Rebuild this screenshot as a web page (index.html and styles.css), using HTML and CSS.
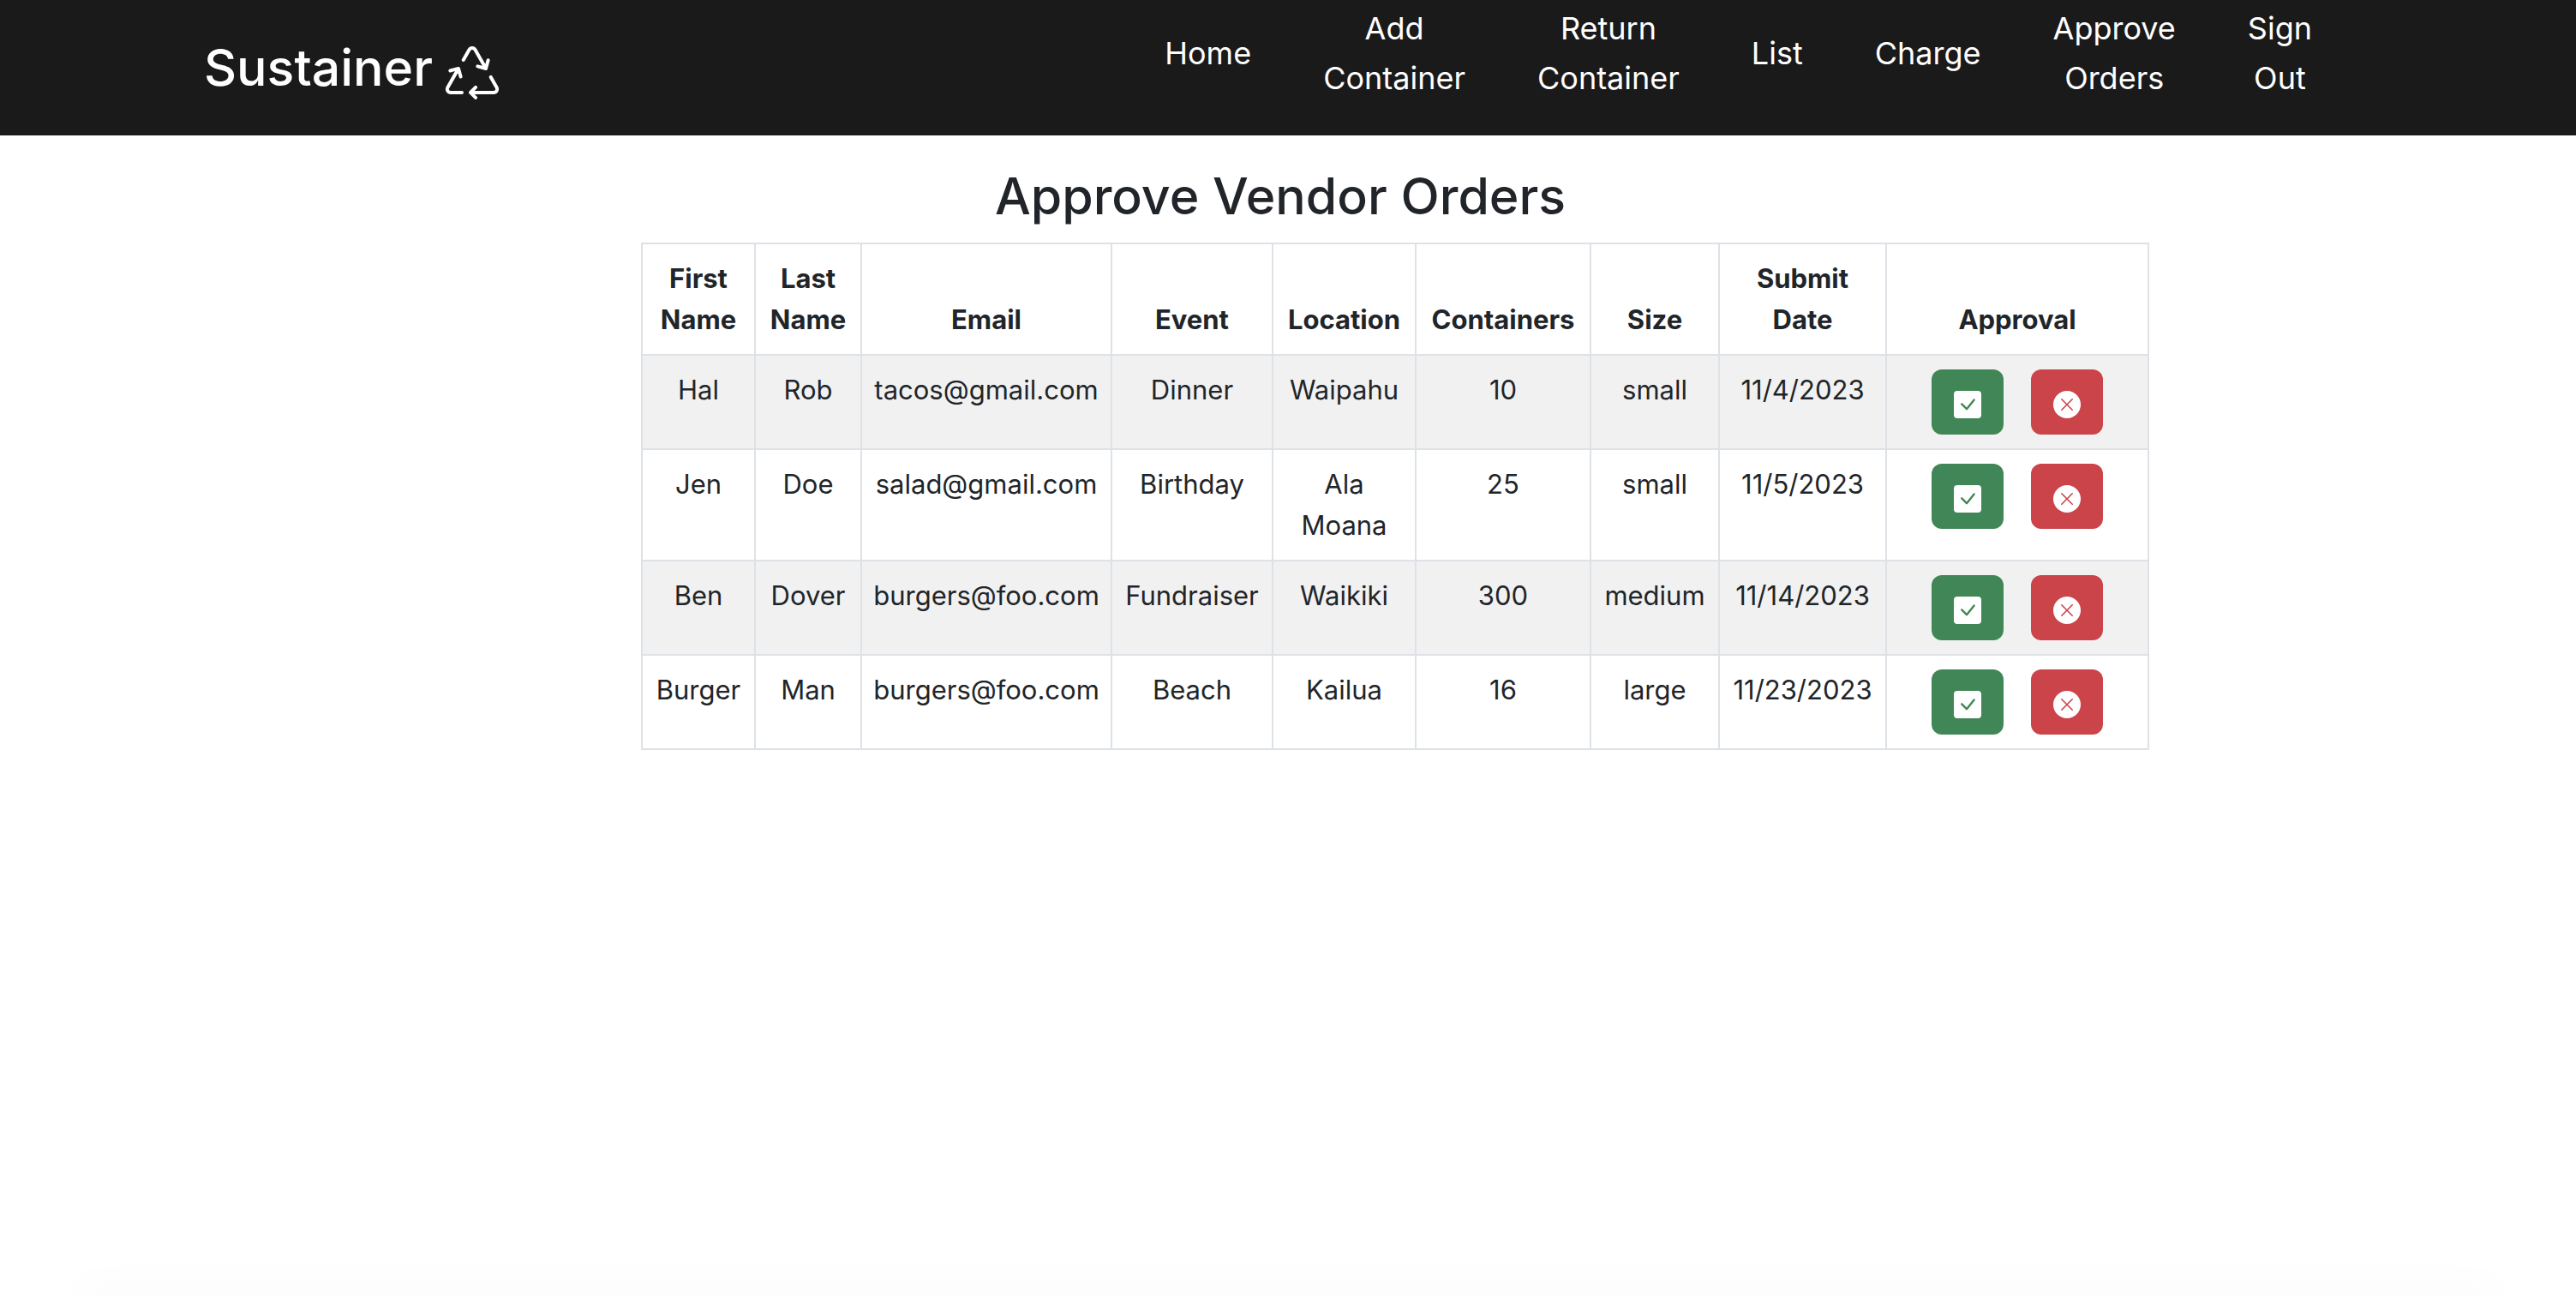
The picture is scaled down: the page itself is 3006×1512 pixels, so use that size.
FILE: index.html
```html
<!DOCTYPE html>
<html lang="en">
<head>
  <meta charset="utf-8">
  <title>Sustainer</title>
  <link rel="stylesheet" href="styles.css">
</head>
<body>
  <svg class="sprite" aria-hidden="true">
    <symbol id="check" viewBox="0 0 16 16">
      <rect width="16" height="16" rx="2" fill="#fff"/>
      <path d="M4.6 7.7l2.9 2.9L11.8 5.2" fill="none" stroke="#418657" stroke-width="1.2" stroke-linecap="round" stroke-linejoin="round"/>
    </symbol>
    <symbol id="cross" viewBox="0 0 16 16">
      <circle cx="8" cy="8" r="8" fill="#fff"/>
      <path d="M4.9 4.9l6.2 6.2M11.1 4.9l-6.2 6.2" fill="none" stroke="#cb444a" stroke-width=".8" stroke-linecap="round"/>
    </symbol>
  </svg>

  <header class="navbar">
    <a class="brand" href="#">
      Sustainer
      <svg class="brand-icon" viewBox="0 0 16 16" fill="currentColor" aria-hidden="true"><path d="M9.302 1.256a1.5 1.5 0 0 0-2.604 0l-1.704 2.98a.5.5 0 0 0 .869.497l1.703-2.981a.5.5 0 0 1 .868 0l2.54 4.444-1.256-.337a.5.5 0 1 0-.26.966l2.415.647a.5.5 0 0 0 .613-.353l.647-2.415a.5.5 0 1 0-.966-.259l-.333 1.242-2.532-4.431zM2.973 7.773l-1.255.337a.5.5 0 1 1-.26-.966l2.416-.647a.5.5 0 0 1 .612.353l.647 2.415a.5.5 0 0 1-.966.259l-.333-1.242-2.545 4.454a.5.5 0 0 0 .434.748H5a.5.5 0 0 1 0 1H1.723A1.5 1.5 0 0 1 .421 12.24l2.552-4.467zm10.89 1.463a.5.5 0 1 0-.868.496l1.716 3.004a.5.5 0 0 1-.434.748h-5.57l.647-.646a.5.5 0 1 0-.708-.707l-1.5 1.5a.498.498 0 0 0 0 .707l1.5 1.5a.5.5 0 1 0 .708-.707l-.647-.647h5.57a1.5 1.5 0 0 0 1.302-2.244l-1.716-3.004z"/></svg>
    </a>
    <nav class="links">
      <a href="#">Home</a>
      <a href="#">Add Container</a>
      <a href="#">Return Container</a>
      <a href="#">List</a>
      <a href="#">Charge</a>
      <a href="#">Approve Orders</a>
      <a href="#">Sign Out</a>
    </nav>
  </header>

  <main class="page">
    <h1 class="title">Approve Vendor Orders</h1>
    <table class="orders">
      <colgroup>
        <col class="col-first"><col class="col-last"><col class="col-email"><col class="col-event"><col class="col-location"><col class="col-containers"><col class="col-size"><col class="col-date"><col class="col-approval">
      </colgroup>
      <thead>
        <tr><th>First Name</th><th>Last Name</th><th>Email</th><th>Event</th><th>Location</th><th>Containers</th><th>Size</th><th>Submit Date</th><th>Approval</th></tr>
      </thead>
      <tbody>
        <tr>
          <td>Hal</td><td>Rob</td><td>tacos@gmail.com</td><td>Dinner</td><td>Waipahu</td><td>10</td><td>small</td><td>11/4/2023</td>
          <td><div class="actions"><button class="btn approve" type="button" aria-label="Approve"><svg><use href="#check"/></svg></button><button class="btn reject" type="button" aria-label="Reject"><svg><use href="#cross"/></svg></button></div></td>
        </tr>
        <tr>
          <td>Jen</td><td>Doe</td><td>salad@gmail.com</td><td>Birthday</td><td>Ala Moana</td><td>25</td><td>small</td><td>11/5/2023</td>
          <td><div class="actions"><button class="btn approve" type="button" aria-label="Approve"><svg><use href="#check"/></svg></button><button class="btn reject" type="button" aria-label="Reject"><svg><use href="#cross"/></svg></button></div></td>
        </tr>
        <tr>
          <td>Ben</td><td>Dover</td><td>burgers@foo.com</td><td>Fundraiser</td><td>Waikiki</td><td>300</td><td>medium</td><td>11/14/2023</td>
          <td><div class="actions"><button class="btn approve" type="button" aria-label="Approve"><svg><use href="#check"/></svg></button><button class="btn reject" type="button" aria-label="Reject"><svg><use href="#cross"/></svg></button></div></td>
        </tr>
        <tr>
          <td>Burger</td><td>Man</td><td>burgers@foo.com</td><td>Beach</td><td>Kailua</td><td>16</td><td>large</td><td>11/23/2023</td>
          <td><div class="actions"><button class="btn approve" type="button" aria-label="Approve"><svg><use href="#check"/></svg></button><button class="btn reject" type="button" aria-label="Reject"><svg><use href="#cross"/></svg></button></div></td>
        </tr>
      </tbody>
    </table>
  </main>
  <footer class="footer"></footer>
</body>
</html>
```
FILE: styles.css
```css
* {
  box-sizing: border-box;
}

body {
  display: flex;
  flex-direction: column;
  min-height: 100vh;
  margin: 0;
  background: #fff;
  color: #212529;
  font-family: Inter, "Liberation Sans", sans-serif;
  font-size: 31px;
  line-height: 48px;
}

.sprite {
  position: absolute;
  width: 0;
  height: 0;
}

/* Navigation bar */
.navbar {
  display: flex;
  justify-content: space-between;
  align-items: flex-start;
  padding: 4px 308px 38px 238px;
  background: #1b1a1a;
}

.navbar a {
  color: #fff;
  text-decoration: none;
}

.brand {
  display: flex;
  align-items: center;
  gap: 14px;
  padding-top: 38px;
  font-size: 59px;
  font-weight: 500;
  line-height: 74px;
}

.brand-icon {
  width: 64px;
  height: 64px;
  margin-top: 10px;
}

.links {
  display: flex;
  align-items: center;
  gap: 84px;
  font-size: 36px;
  line-height: 58px;
  text-align: center;
}

.links a {
  width: min-content;
}

/* Orders */
.page {
  display: grid;
  grid-template-columns: 748fr 1760fr 498fr;
  padding-top: 32px;
}

.title {
  grid-column: 1 / -1;
  margin: 0 0 16px;
  padding-right: 18px;
  font-size: 59px;
  font-weight: 500;
  line-height: 77px;
  text-align: center;
}

.orders {
  grid-column: 2;
  width: 100%;
  table-layout: fixed;
  border-collapse: collapse;
  text-align: center;
}

.col-first { width: 132px; }
.col-last { width: 124px; }
.col-email { width: 292px; }
.col-event { width: 188px; }
.col-location { width: 167px; }
.col-containers { width: 204px; }
.col-size { width: 150px; }
.col-date { width: 195px; }
.col-approval { width: 306px; }

.orders th,
.orders td {
  padding: 16px 8px;
  border: 2px solid #dee2e6;
  vertical-align: top;
}

.orders th {
  font-weight: 700;
  vertical-align: bottom;
}

.orders tbody tr:nth-child(odd) {
  background: #f1f1f1;
}

.actions {
  display: flex;
  justify-content: center;
  gap: 32px;
}

.btn {
  display: flex;
  padding: 25px 26px 19px;
  border: 0;
  border-radius: 12px;
}

.btn svg {
  width: 32px;
  height: 32px;
}

.approve {
  background: #418657;
}

.reject {
  background: #cb444a;
}

/* Soft edge along the bottom of the window */
.footer {
  margin: auto 100px 0;
  box-shadow: 0 0 50px 10px rgba(0, 0, 0, 0.03);
}
```
